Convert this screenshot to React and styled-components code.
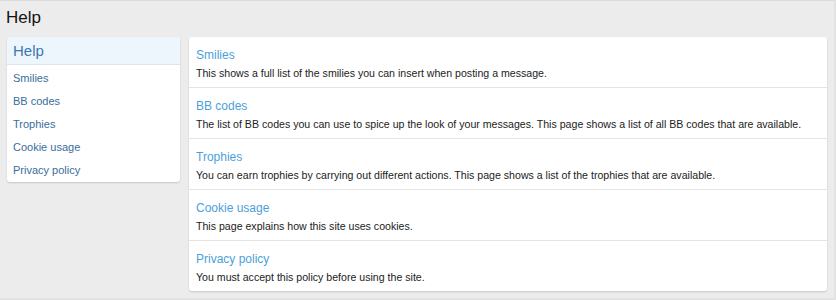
import React from "react";
import styled, { createGlobalStyle } from "styled-components";

const Global = createGlobalStyle`
  html, body { margin: 0; padding: 0; }
  body { background: #ececec; font-family: "Liberation Sans", Arial, sans-serif; }
`;

const Page = styled.div`
  box-sizing: border-box;
  width: 836px;
  height: 300px;
  background: #ececec;
  border-top: 1px solid #dcdcdc;
  border-right: 2px solid #e2e2e2;
  border-bottom: 2px solid #e2e2e2;
  overflow: hidden;
`;

const Title = styled.h1`
  box-sizing: border-box;
  margin: 0;
  padding: 7px 6px 0;
  height: 29px;
  font-size: 17px;
  font-weight: normal;
  line-height: 20px;
  color: #141414;
`;

const Layout = styled.div`
  display: flex;
  align-items: flex-start;
  gap: 9px;
  padding: 7px 7px 0 7px;
`;

const Sidebar = styled.nav`
  width: 173px;
  flex: none;
  background: #fff;
  border-radius: 3px;
  box-shadow: 0 1px 2px rgba(0, 0, 0, 0.16);
  overflow: hidden;
`;

const SideHeader = styled.div`
  height: 27px;
  line-height: 27px;
  padding: 0 6px;
  background: #edf5fd;
  border-bottom: 1px solid #dde6ef;
  font-size: 15px;
  color: #3c78b2;
`;

const SideList = styled.ul`
  list-style: none;
  margin: 0;
  padding: 2px 0 0;
`;

const SideItem = styled.li`
  height: 23px;
  line-height: 23px;
  padding: 0 6px;
  font-size: 11px;
  color: #3a6d9c;
`;

const Main = styled.div`
  flex: 1;
  background: #fff;
  border-radius: 3px;
  box-shadow: 0 1px 2px rgba(0, 0, 0, 0.16);
  overflow: hidden;
`;

const Row = styled.div`
  padding: 10px 7px 6px;
  height: 34px;
  border-top: ${(p) => (p.$first ? "none" : "1px solid #e4e4e4")};
`;

const RowTitle = styled.div`
  font-size: 12px;
  line-height: 16px;
  color: #4d9fd9;
  margin-bottom: 2px;
`;

const RowDesc = styled.div`
  font-size: 10.6px;
  line-height: 16px;
  color: #1c1c1c;
`;

const items = [
  ["Smilies", "This shows a full list of the smilies you can insert when posting a message."],
  ["BB codes", "The list of BB codes you can use to spice up the look of your messages. This page shows a list of all BB codes that are available."],
  ["Trophies", "You can earn trophies by carrying out different actions. This page shows a list of the trophies that are available."],
  ["Cookie usage", "This page explains how this site uses cookies."],
  ["Privacy policy", "You must accept this policy before using the site."],
];

export default function App() {
  return (
    <>
      <Global />
      <Page>
        <Title>Help</Title>
        <Layout>
          <Sidebar>
            <SideHeader>Help</SideHeader>
            <SideList>
              {items.map(([t]) => (
                <SideItem key={t}>{t}</SideItem>
              ))}
            </SideList>
          </Sidebar>
          <Main>
            {items.map(([t, d], i) => (
              <Row key={t} $first={i === 0}>
                <RowTitle>{t}</RowTitle>
                <RowDesc>{d}</RowDesc>
              </Row>
            ))}
          </Main>
        </Layout>
      </Page>
    </>
  );
}
